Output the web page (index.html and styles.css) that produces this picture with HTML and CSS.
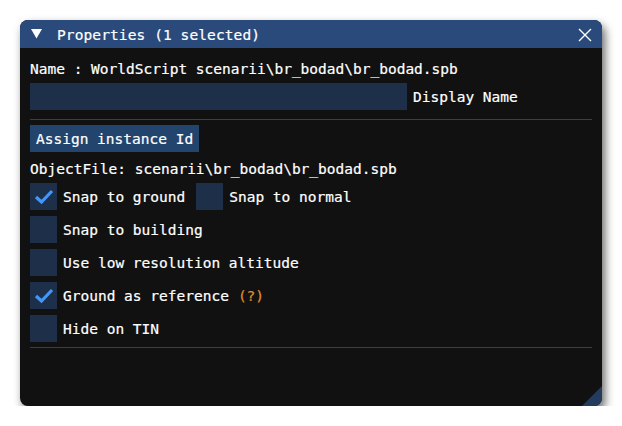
FILE: index.html
```html
<!DOCTYPE html>
<html lang="en">

<head>
    <meta charset="UTF-8">
    <meta name="viewport" content="width=device-width, initial-scale=1.0">
    <title>Properties</title>
    <link rel="stylesheet" href="styles.css">
</head>

<body>
    <div class="window">
        <div class="titlebar">
            <svg class="collapse" width="11" height="10" viewBox="0 0 11 10">
                <polygon points="0,0 11,0 5.5,9.5" fill="#fff" />
            </svg>
            <span class="title">Properties (1 selected)</span>
            <svg class="close" width="14" height="14" viewBox="0 0 14 14">
                <path d="M1 1 L13 13 M13 1 L1 13" stroke="#fff" stroke-width="1.4" />
            </svg>
        </div>
        <div class="content">
            <div class="text-line">Name : WorldScript scenarii\br_bodad\br_bodad.spb</div>
            <div class="input-row">
                <div class="input"></div>
                <span>Display Name</span>
            </div>
            <div class="separator"></div>
            <button class="btn">Assign instance Id</button>
            <div class="text-line object-file">ObjectFile: scenarii\br_bodad\br_bodad.spb</div>
            <div class="checks">
                <div class="check-row">
                    <label class="check">
                        <span class="box checked"><svg width="20" height="16" viewBox="0 0 20 16"><path d="M2 8 L7.5 13 L18 2" fill="none" stroke="#4296fa" stroke-width="3.2" /></svg></span>
                        Snap to ground
                    </label>
                    <label class="check">
                        <span class="box"></span>
                        Snap to normal
                    </label>
                </div>
                <div class="check-row">
                    <label class="check"><span class="box"></span>Snap to building</label>
                </div>
                <div class="check-row">
                    <label class="check"><span class="box"></span>Use low resolution altitude</label>
                </div>
                <div class="check-row">
                    <label class="check">
                        <span class="box checked"><svg width="20" height="16" viewBox="0 0 20 16"><path d="M2 8 L7.5 13 L18 2" fill="none" stroke="#4296fa" stroke-width="3.2" /></svg></span>
                        Ground as reference <span class="help">(?)</span>
                    </label>
                </div>
                <div class="check-row">
                    <label class="check"><span class="box"></span>Hide on TIN</label>
                </div>
            </div>
            <div class="separator bottom"></div>
        </div>
        <div class="grip"></div>
    </div>
</body>

</html>
```

FILE: styles.css
```css
body {
    margin: 0;
    padding: 20px 0 0 20px;
    background-color: #ffffff;
    font-family: 'DejaVu Sans Mono', 'Liberation Mono', monospace;
    font-size: 14.5px;
    color: #ffffff;
    -webkit-text-stroke: 0.2px #ffffff;
}

.window {
    position: relative;
    width: 582px;
    height: 386px;
    background-color: #111111;
    border-radius: 8px;
    overflow: hidden;
    box-shadow: 3px 5px 10px rgba(0, 0, 0, 0.6);
}

.titlebar {
    height: 28px;
    background-color: #294a7a;
    display: flex;
    align-items: center;
    padding: 0 10px 0 11px;
}

.collapse {
    margin-right: 15px;
}

.title {
    flex: 1;
    line-height: 28px;
    padding-top: 1px;
    letter-spacing: 0.1px;
}

.close {
    margin-top: 1px;
}

.content {
    padding: 11px 10px 0 10px;
    display: flex;
    flex-direction: column;
}

.text-line {
    line-height: 20px;
    height: 20px;
    white-space: nowrap;
}

.input-row {
    display: flex;
    align-items: center;
    gap: 6px;
    margin-top: 4px;
}

.input {
    width: 377px;
    height: 27px;
    background-color: #1d2f49;
}

.separator {
    height: 1px;
    background-color: #3e3e47;
    margin-top: 9px;
}

.btn {
    align-self: flex-start;
    margin-top: 5px;
    height: 27px;
    padding: 0 6px;
    border: none;
    background-color: #23456d;
    color: #ffffff;
    font-family: inherit;
    font-size: inherit;
    -webkit-text-stroke: inherit;
}

.object-file {
    margin-top: 7px;
}

.checks {
    display: flex;
    flex-direction: column;
    gap: 6px;
    margin-top: 4px;
}

.check-row {
    display: flex;
    gap: 11px;
}

.check {
    display: flex;
    align-items: center;
    gap: 6px;
    white-space: nowrap;
}

.box {
    width: 27px;
    height: 27px;
    background-color: #1d2f49;
    display: flex;
    align-items: center;
    justify-content: center;
}

.help {
    color: #e08e2b;
    -webkit-text-stroke: 0.2px #e08e2b;
    margin-left: 3px;
}

.separator.bottom {
    margin-top: 5px;
}

.grip {
    position: absolute;
    right: 0;
    bottom: 0;
    width: 20px;
    height: 20px;
    background-color: #233c5e;
    clip-path: polygon(100% 0, 100% 100%, 0 100%);
}
```
